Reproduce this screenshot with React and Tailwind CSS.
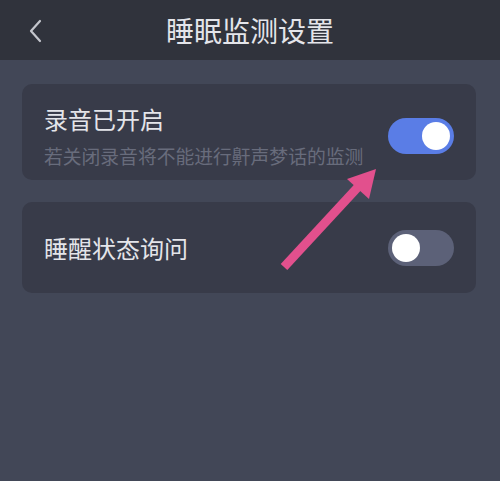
import { useState } from 'react';

const Toggle = ({ on, onChange }) => (
  <button
    onClick={onChange}
    className={`relative w-[66px] h-[36px] rounded-full shrink-0 transition-colors ${
      on ? 'bg-[#5a7de6]' : 'bg-[#5c6178]'
    }`}
  >
    <span
      className={`absolute top-[4px] w-[28px] h-[28px] rounded-full bg-white transition-all ${
        on ? 'left-[34px]' : 'left-[4px]'
      }`}
    />
  </button>
);

const App = () => {
  const [recording, setRecording] = useState(true);
  const [wakeAsk, setWakeAsk] = useState(false);

  return (
    <div
      className="relative w-[500px] h-[481px] bg-[#424757] overflow-hidden"
      style={{ fontFamily: '"Noto Sans CJK SC", "Noto Sans", sans-serif' }}
    >
      {/* header */}
      <div className="relative h-[60px] bg-[#30333c] flex items-center justify-center">
        <button className="absolute left-[26px] top-[18px] text-[#c4c6cd]">
          <svg width="20" height="26" viewBox="0 0 20 26" fill="none">
            <path d="M14 3 L5 13 L14 23" stroke="currentColor" strokeWidth="2.2" strokeLinecap="round" strokeLinejoin="round" />
          </svg>
        </button>
        <h1 className="text-[28px] leading-none text-[#e4e5ea]">睡眠监测设置</h1>
      </div>

      <div className="pl-[22px] pr-[24px] pt-[24px] flex flex-col gap-[22px]">
        <div className="bg-[#383b49] rounded-[10px] px-[22px] pt-[20px] pb-[12px] flex items-center justify-between">
          <div className="flex flex-col gap-[10px]">
            <span className="text-[24px] leading-[30px] text-[#e4e5ea]">录音已开启</span>
            <span className="text-[18.8px] leading-[24px] text-[#686c7c]">若关闭录音将不能进行鼾声梦话的监测</span>
          </div>
          <Toggle on={recording} onChange={() => setRecording(!recording)} />
        </div>

        <div className="bg-[#383b49] rounded-[10px] px-[22px] h-[91px] flex items-center justify-between">
          <span className="text-[24px] leading-[30px] text-[#e4e5ea]">睡醒状态询问</span>
          <Toggle on={wakeAsk} onChange={() => setWakeAsk(!wakeAsk)} />
        </div>
      </div>

      {/* annotation arrow */}
      <svg className="absolute left-0 top-0 pointer-events-none" width="500" height="481" viewBox="0 0 500 481">
        <line x1="284" y1="267" x2="358" y2="187" stroke="#e2508d" strokeWidth="9" />
        <polygon points="376,169 347,179 369,199" fill="#e2508d" />
      </svg>
    </div>
  );
};

export default App;
